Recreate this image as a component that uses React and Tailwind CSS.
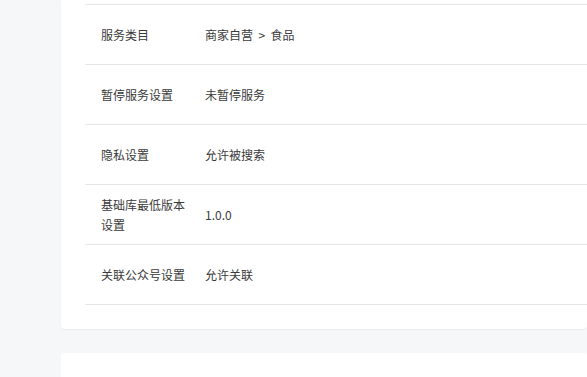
import React from 'react'

const rows = [
  { label: '服务类目', value: '商家自营\u00a0\u00a0>\u00a0\u00a0食品' },
  { label: '暂停服务设置', value: '未暂停服务' },
  { label: '隐私设置', value: '允许被搜索' },
  { label: '基础库最低版本设置', value: '1.0.0' },
  { label: '关联公众号设置', value: '允许关联' },
]

export default function App() {
  return (
    <div
      className="min-h-[377px] bg-[#f6f7f9] pl-[61px] overflow-hidden"
      style={{ fontFamily: '"Noto Sans CJK SC", "Liberation Sans", sans-serif' }}
    >
      <div className="bg-white rounded-b-[4px] shadow-[0_1px_2px_rgba(0,0,0,0.06)] pt-[4px] pb-[24px] pl-[24px]">
        <div className="border-t border-[#e5e6ea]">
          {rows.map((row) => (
            <div
              key={row.label}
              className="h-[60px] flex items-center border-b border-[#e5e6ea] pl-[16px] text-[12px] text-[#3a3a3a]"
            >
              <div className="w-[88px] mr-[16px] leading-[20px]">{row.label}</div>
              <div className="leading-[20px]">{row.value}</div>
            </div>
          ))}
        </div>
      </div>
      <div className="mt-[24px] bg-white rounded-t-[4px] h-[40px]" />
    </div>
  )
}
